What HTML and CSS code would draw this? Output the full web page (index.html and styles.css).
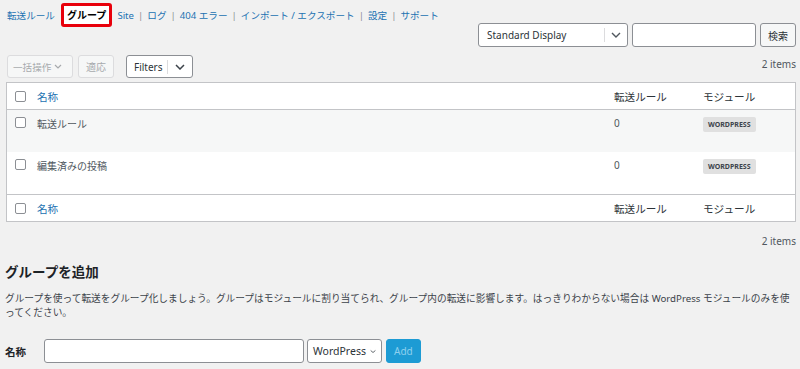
FILE: index.html
```html
<!DOCTYPE html>
<html lang="ja">
<head>
    <meta charset="UTF-8">
    <meta name="viewport" content="width=device-width, initial-scale=1.0">
    <title>グループ</title>
    <link rel="stylesheet" href="styles.css">
</head>
<body>
    <div class="wrap">
        <ul class="subsubsub">
            <li><a href="#">転送ルール</a></li>
            <li class="current"><a href="#">グループ</a></li>
            <li class="first"><a href="#">Site</a></li>
            <li><span class="sep">|</span><a href="#">ログ</a></li>
            <li><span class="sep">|</span><a href="#">404 エラー</a></li>
            <li><span class="sep">|</span><a href="#">インポート / エクスポート</a></li>
            <li><span class="sep">|</span><a href="#">設定</a></li>
            <li><span class="sep">|</span><a href="#">サポート</a></li>
        </ul>

        <div class="search-box">
            <div class="select wide">
                <span class="select-label">Standard Display</span>
                <span class="select-toggle"><svg width="10" height="6" viewBox="0 0 10 6"><path d="M1 1l4 4 4-4" fill="none" stroke="#50575e" stroke-width="1.4"/></svg></span>
            </div>
            <input type="text" class="search-input">
            <button class="button">検索</button>
        </div>

        <div class="tablenav">
            <div class="actions">
                <div class="plain-select disabled">一括操作 <svg width="8" height="5" viewBox="0 0 8 5"><path d="M1 1l3 3 3-3" fill="none" stroke="#a7aaad" stroke-width="1.2"/></svg></div>
                <button class="button disabled">適応</button>
                <div class="select filters">
                    <span class="select-label">Filters</span>
                    <span class="select-toggle"><svg width="10" height="6" viewBox="0 0 10 6"><path d="M1 1l4 4 4-4" fill="none" stroke="#3c434a" stroke-width="1.5"/></svg></span>
                </div>
            </div>
            <span class="count">2 items</span>
        </div>

        <table class="list-table">
            <thead>
                <tr>
                    <th class="check"><input type="checkbox"></th>
                    <th class="name"><a href="#">名称</a></th>
                    <th class="rules">転送ルール</th>
                    <th class="module">モジュール</th>
                </tr>
            </thead>
            <tbody>
                <tr class="alt">
                    <td class="check"><input type="checkbox"></td>
                    <td>転送ルール</td>
                    <td>0</td>
                    <td><span class="badge">WordPress</span></td>
                </tr>
                <tr>
                    <td class="check"><input type="checkbox"></td>
                    <td>編集済みの投稿</td>
                    <td>0</td>
                    <td><span class="badge">WordPress</span></td>
                </tr>
            </tbody>
            <tfoot>
                <tr>
                    <th class="check"><input type="checkbox"></th>
                    <th class="name"><a href="#">名称</a></th>
                    <th class="rules">転送ルール</th>
                    <th class="module">モジュール</th>
                </tr>
            </tfoot>
        </table>

        <div class="tablenav bottom">
            <span class="count">2 items</span>
        </div>

        <h2>グループを追加</h2>
        <p class="intro">グループを使って転送をグループ化しましょう。グループはモジュールに割り当てられ、グループ内の転送に影響します。はっきりわからない場合は WordPress モジュールのみを使ってください。</p>

        <div class="add-form">
            <label>名称</label>
            <input type="text" class="name-input">
            <div class="plain-select module-select">WordPress <svg width="9" height="5" viewBox="0 0 9 5"><path d="M1 1l3.5 3 3.5-3" fill="none" stroke="#3c434a" stroke-width="1.2"/></svg></div>
            <button class="button primary">Add</button>
        </div>
    </div>
</body>
</html>
```

FILE: styles.css
```css
body {
    margin: 0;
    background: #f1f1f1;
    color: #3c434a;
    font-family: "Noto Sans", "Noto Sans CJK JP", sans-serif;
    font-size: 11px;
}
a {
    color: #2271b1;
    text-decoration: none;
}
.wrap {
    padding: 3px 4px 0 5px;
}

/* nav links */
.subsubsub {
    list-style: none;
    margin: 0;
    padding: 0 0 0 2px;
    display: flex;
    align-items: center;
    height: 24px;
    font-size: 9.6px;
}
.subsubsub li {
    display: flex;
    align-items: center;
    white-space: nowrap;
}
.subsubsub .sep {
    color: #8c8f94;
    margin: 0 4px;
}
.subsubsub .first a {
    margin-left: 5px;
}
.subsubsub .current a {
    color: #000;
    font-weight: bold;
    background: #fff;
    border: 3px solid #e8000b;
    border-radius: 3px;
    padding: 1px 3px;
    margin-left: 6px;
    line-height: 16px;
    font-size: 10px;
}

/* search row */
.search-box {
    display: flex;
    justify-content: flex-end;
    gap: 4px;
    margin-top: -4px;
}
.select {
    display: flex;
    align-items: center;
    background: #fff;
    border: 1px solid #8c8f94;
    border-radius: 3px;
    height: 22px;
    box-sizing: border-box;
}
.select.wide {
    width: 150px;
    height: 24px;
}
.select-label {
    flex: 1;
    padding-left: 8px;
    font-size: 10px;
    color: #2c3338;
}
.select-toggle {
    width: 22px;
    height: 14px;
    border-left: 1px solid #dcdcde;
    display: flex;
    align-items: center;
    justify-content: center;
}
.search-input {
    width: 124px;
    height: 24px;
    box-sizing: border-box;
    border: 1px solid #8c8f94;
    border-radius: 3px;
    margin: 0;
}
.button {
    font-family: inherit;
    font-size: 10px;
    height: 24px;
    padding: 0 7px;
    border: 1px solid #8c8f94;
    border-radius: 3px;
    background: #f6f7f7;
    color: #2c3338;
}
.button.disabled {
    color: #a7aaad;
    border-color: #dcdcde;
    background: #f6f7f7;
    height: 23px;
}

/* table nav */
.tablenav {
    display: flex;
    align-items: flex-end;
    justify-content: space-between;
    margin-top: 8px;
    height: 23px;
}
.actions {
    display: flex;
    align-items: center;
    gap: 5px;
    padding-left: 2px;
}
.plain-select {
    display: flex;
    align-items: center;
    gap: 4px;
    height: 23px;
    box-sizing: border-box;
    padding: 0 4px 0 7px;
    border: 1px solid #8c8f94;
    border-radius: 3px;
    background: #fff;
    font-size: 10.5px;
    white-space: nowrap;
}
.plain-select.disabled {
    color: #a7aaad;
    border-color: #dcdcde;
    background: #f6f7f7;
    width: 66px;
    font-size: 9.6px;
    padding: 0 5px;
    gap: 3px;
}
.select.filters {
    width: 67px;
    margin-left: 7px;
    height: 23px;
}
.select.filters .select-label {
    font-size: 10px;
    color: #2c3338;
    padding-left: 7px;
}
.select.filters .select-toggle {
    width: 24px;
}
.count {
    font-size: 10px;
    color: #50575e;
    line-height: 14px;
    margin-bottom: 7px;
}

/* list table */
.list-table {
    width: calc(100% - 1px);
    margin: 4px 0 0 1px;
    border-collapse: collapse;
    border: 1px solid #c3c4c7;
    background: #fff;
    font-size: 10px;
}
.list-table th {
    text-align: left;
    font-weight: normal;
    font-size: 10.6px;
    color: #2c3338;
    height: 26px;
    padding: 0;
}
.list-table thead th {
    border-bottom: 1px solid #c3c4c7;
}
.list-table tfoot th {
    border-top: 1px solid #c3c4c7;
}
.list-table .check {
    width: 22px;
    padding-left: 8px;
}
.list-table .rules {
    width: 89px;
}
.list-table .module {
    width: 92px;
}
.list-table td {
    vertical-align: top;
    padding: 6px 0 0;
    height: 35px;
    color: #50575e;
}
.list-table td.check {
    padding-top: 7px;
}
.list-table tr.alt td {
    background: #f6f7f7;
}
input[type="checkbox"] {
    appearance: none;
    width: 11px;
    height: 11px;
    margin: 0;
    display: block;
    border: 1px solid #8c8f94;
    border-radius: 2px;
    background: #fff;
}
.badge {
    display: inline-block;
    background: #e0e0e0;
    color: #3c434a;
    font-size: 7px;
    font-weight: bold;
    text-transform: uppercase;
    line-height: 9px;
    padding: 3px 5px;
    border-radius: 2px;
    margin-top: -2px;
}

.tablenav.bottom {
    height: 16px;
    margin-top: 12px;
    justify-content: flex-end;
}
.tablenav.bottom .count {
    margin-bottom: 2px;
}

h2 {
    font-size: 13.5px;
    font-weight: bold;
    color: #1d2327;
    margin: 10px 0 0;
    line-height: 24px;
}
.intro {
    font-size: 9.7px;
    line-height: 14px;
    margin: 8px 0 0;
    color: #3c434a;
}

/* add form */
.add-form {
    display: flex;
    align-items: center;
    gap: 3px;
    margin-top: 19px;
}
.add-form label {
    font-weight: bold;
    font-size: 10.5px;
    color: #1d2327;
    width: 36px;
}
.name-input {
    width: 260px;
    height: 24px;
    box-sizing: border-box;
    border: 1px solid #8c8f94;
    border-radius: 3px;
    margin: 0;
}
.module-select {
    width: 75px;
    height: 24px;
    justify-content: space-between;
    padding: 0 5px;
    color: #2c3338;
}
.button.primary {
    background: #1d9bd4;
    border-color: #1d9bd4;
    color: #8fd0ee;
    margin-left: 1px;
    padding: 0 7px;
}
```
